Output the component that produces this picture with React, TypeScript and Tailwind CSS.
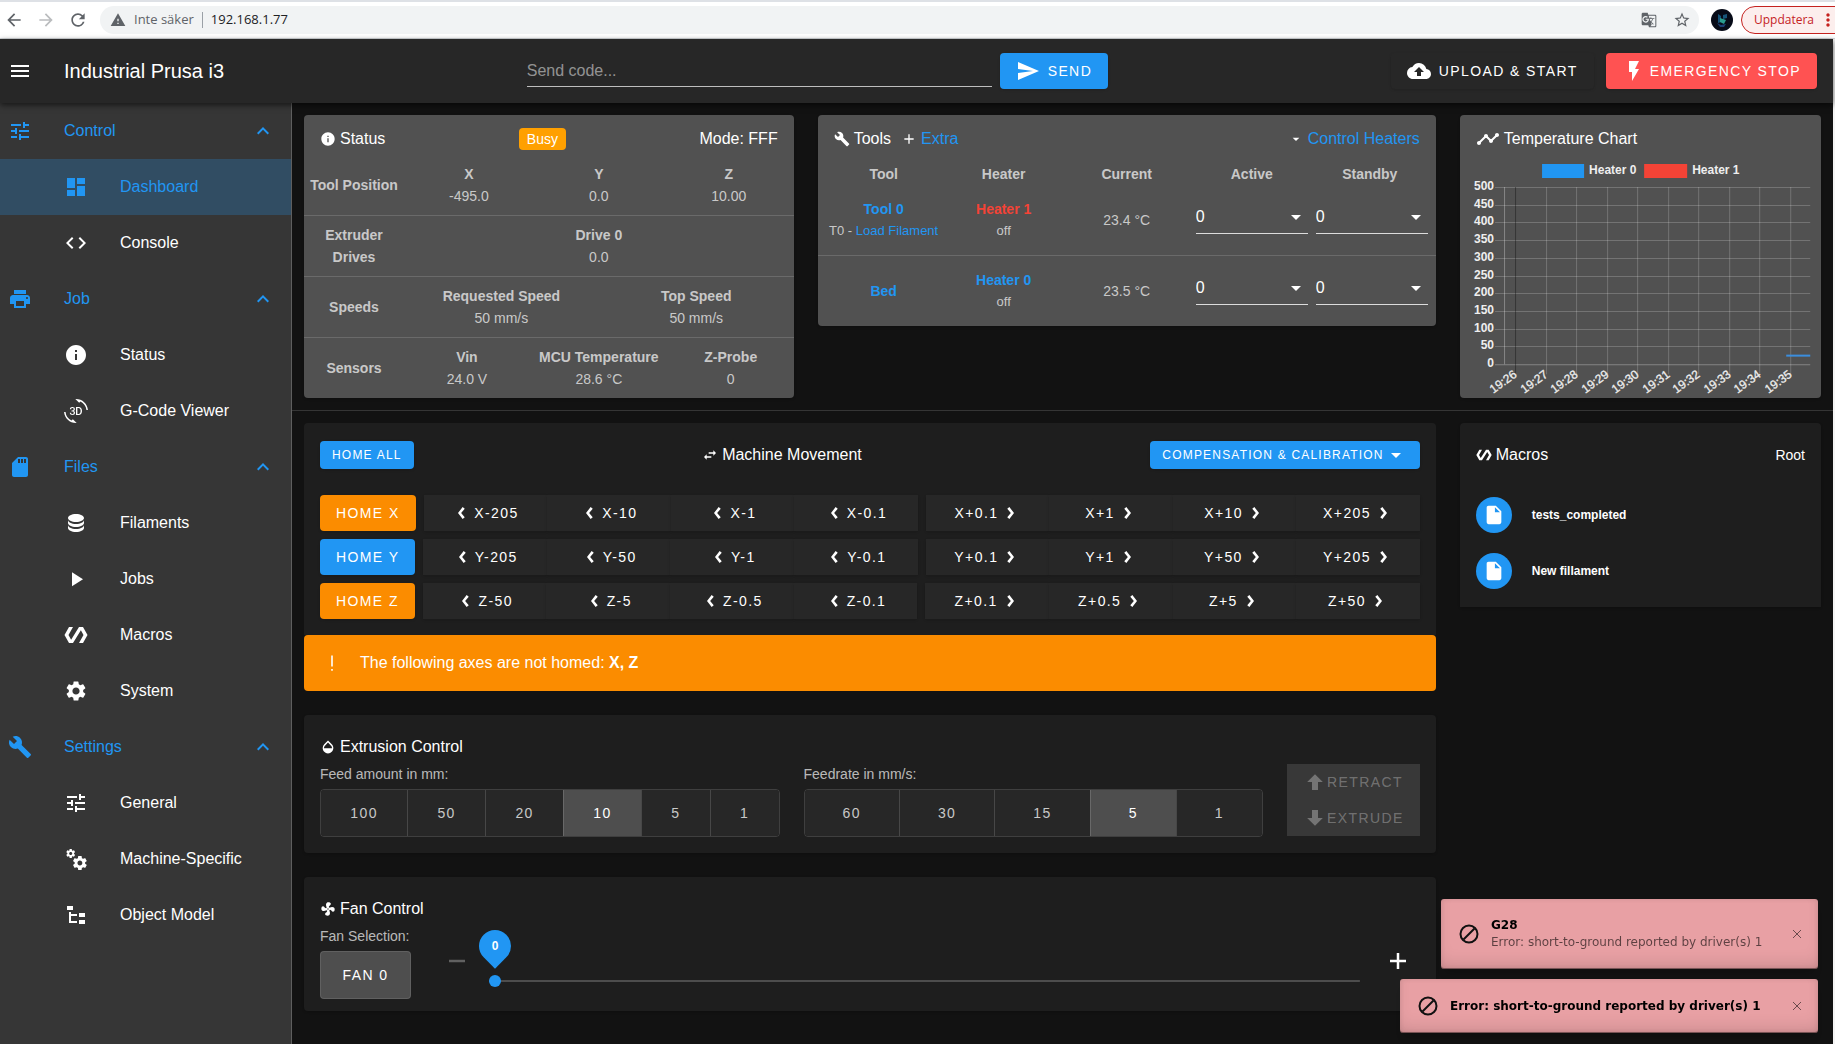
import { useState } from "react";
import type { ComponentType, ReactNode } from "react";
import clsx from "clsx";
import {
  Md3dRotation,
  MdAdd,
  MdArrowBack,
  MdArrowForward,
  MdBackup,
  MdBuild,
  MdCode,
  MdDashboard,
  MdGTranslate,
  MdInfo,
  MdKeyboardArrowUp,
  MdMenu,
  MdMoreVert,
  MdOpacity,
  MdPolymer,
  MdPrint,
  MdRefresh,
  MdSdCard,
  MdSend,
  MdSettings,
  MdStarBorder,
  MdTimeline,
  MdTune,
  MdWarning,
} from "react-icons/md";

type IconType = ComponentType<{ className?: string }>;

function mdi(path: string): IconType {
  return function Icon({ className }) {
    return (
      <svg viewBox="0 0 24 24" fill="currentColor" className={className} aria-hidden="true">
        <path d={path} />
      </svg>
    );
  };
}

const DatabaseIcon = mdi(
  "M12,3C7.58,3 4,4.79 4,7C4,9.21 7.58,11 12,11C16.42,11 20,9.21 20,7C20,4.79 16.42,3 12,3M4,9V12C4,14.21 7.58,16 12,16C16.42,16 20,14.21 20,12V9C20,11.21 16.42,13 12,13C7.58,13 4,11.21 4,9M4,14V17C4,19.21 7.58,21 12,21C16.42,21 20,19.21 20,17V14C20,16.21 16.42,18 12,18C7.58,18 4,16.21 4,14Z"
);
const PlayIcon = mdi("M8,5.14V19.14L19,12.14L8,5.14Z");
const CogsIcon = mdi(
  "M15.9,18.45C17.25,18.45 18.35,17.35 18.35,16C18.35,14.65 17.25,13.55 15.9,13.55C14.54,13.55 13.45,14.65 13.45,16C13.45,17.35 14.54,18.45 15.9,18.45M21.1,16.68L22.58,17.84C22.71,17.95 22.75,18.13 22.66,18.29L21.26,20.71C21.17,20.86 21,20.92 20.83,20.86L19.09,20.16C18.73,20.44 18.33,20.67 17.91,20.85L17.64,22.7C17.62,22.87 17.47,23 17.3,23H14.5C14.32,23 14.18,22.87 14.15,22.7L13.89,20.85C13.46,20.67 13.07,20.44 12.71,20.16L10.96,20.86C10.81,20.92 10.62,20.86 10.54,20.71L9.14,18.29C9.05,18.13 9.09,17.95 9.22,17.84L10.7,16.68L10.65,16L10.7,15.31L9.22,14.16C9.09,14.05 9.05,13.86 9.14,13.71L10.54,11.29C10.62,11.13 10.81,11.07 10.96,11.13L12.71,11.84C13.07,11.56 13.46,11.32 13.89,11.15L14.15,9.29C14.18,9.13 14.32,9 14.5,9H17.3C17.47,9 17.62,9.13 17.64,9.29L17.91,11.15C18.33,11.32 18.73,11.56 19.09,11.84L20.83,11.13C21,11.07 21.17,11.13 21.26,11.29L22.66,13.71C22.75,13.86 22.71,14.05 22.58,14.16L21.1,15.31L21.15,16L21.1,16.68M6.69,8.07C7.56,8.07 8.26,7.37 8.26,6.5C8.26,5.63 7.56,4.92 6.69,4.92C5.82,4.92 5.12,5.63 5.12,6.5C5.12,7.37 5.82,8.07 6.69,8.07M10.03,6.94L11,7.68C11.07,7.75 11.09,7.87 11.03,7.97L10.13,9.53C10.08,9.63 9.96,9.67 9.86,9.63L8.74,9.18L8,9.62L7.81,10.81C7.79,10.92 7.7,11 7.59,11H5.79C5.67,11 5.58,10.92 5.56,10.81L5.4,9.62L4.64,9.18L3.52,9.63C3.41,9.67 3.3,9.63 3.24,9.53L2.34,7.97C2.28,7.87 2.31,7.75 2.39,7.68L3.34,6.94L3.31,6.5L3.34,6.06L2.39,5.32C2.31,5.25 2.28,5.13 2.34,5.03L3.24,3.47C3.3,3.37 3.41,3.33 3.52,3.37L4.63,3.82L5.4,3.38L5.56,2.19C5.58,2.08 5.67,2 5.79,2H7.59C7.7,2 7.79,2.08 7.81,2.19L8,3.38L8.74,3.82L9.86,3.37C9.96,3.33 10.08,3.37 10.13,3.47L11.03,5.03C11.09,5.13 11.07,5.25 11,5.32L10.03,6.06L10.06,6.5L10.03,6.94Z"
);
const FileTreeIcon = mdi(
  "M3,3H9V7H3V3M15,10H21V14H15V10M15,17H21V21H15V17M13,13H7V18H13V20H7L5,20V9H7V11H13V13Z"
);
const FanIcon = mdi(
  "M12,11A1,1 0 0,0 11,12A1,1 0 0,0 12,13A1,1 0 0,0 13,12A1,1 0 0,0 12,11M12.5,2C17,2 17.11,5.57 14.75,6.75C13.76,7.24 13.32,8.29 13.13,9.22C13.61,9.42 14.03,9.73 14.35,10.13C18.05,8.13 22.03,8.92 22.03,12.5C22.03,17 18.46,17.1 17.28,14.73C16.78,13.74 15.72,13.3 14.79,13.11C14.59,13.59 14.28,14 13.88,14.34C15.87,18.03 15.08,22 11.5,22C7,22 6.91,18.42 9.27,17.24C10.25,16.75 10.69,15.71 10.89,14.79C10.4,14.59 9.97,14.27 9.65,13.87C5.96,15.85 2,15.07 2,11.5C2,7 5.56,6.89 6.74,9.26C7.24,10.25 8.29,10.68 9.22,10.87C9.41,10.39 9.73,9.97 10.14,9.65C8.15,5.96 8.94,2 12.5,2Z"
);
const SwapIcon = mdi("M21,9L17,5V8H10V10H17V13M7,11L3,15L7,19V16H14V14H7V11Z");
const MenuDownIcon = mdi("M7,10L12,15L17,10H7Z");
const ArrowUpBoldIcon = mdi("M15,20H9V12H4.16L12,4.16L19.84,12H15V20Z");
const ArrowDownBoldIcon = mdi("M9,4H15V12H19.84L12,19.84L4.16,12H9V4Z");
const FileIcon = mdi(
  "M13,9V3.5L18.5,9M6,2C4.89,2 4,2.89 4,4V20A2,2 0 0,0 6,22H18A2,2 0 0,0 20,20V8L14,2H6Z"
);
const FlashIcon = mdi("M7,2V13H10V22L17,10H13L17,2H7Z");
const ChevronLeftIcon = mdi("M14.2,4L17,6.2L12.2,12L17,17.8L14.2,20L8,12Z");
const ChevronRightIcon = mdi("M9.8,4L7,6.2L11.8,12L7,17.8L9.8,20L16,12Z");
const PlusIcon = mdi("M20,13.25H13.25V20H10.75V13.25H4V10.75H10.75V4H13.25V10.75H20V13.25Z");
const MinusIcon = mdi("M20,13.25H4V10.75H20V13.25Z");

const menu: { name: string; icon: IconType; pages: { name: string; icon: IconType }[] }[] = [
  {
    name: "Control",
    icon: MdTune,
    pages: [
      { name: "Dashboard", icon: MdDashboard },
      { name: "Console", icon: MdCode },
    ],
  },
  {
    name: "Job",
    icon: MdPrint,
    pages: [
      { name: "Status", icon: MdInfo },
      { name: "G-Code Viewer", icon: Md3dRotation },
    ],
  },
  {
    name: "Files",
    icon: MdSdCard,
    pages: [
      { name: "Filaments", icon: DatabaseIcon },
      { name: "Jobs", icon: PlayIcon },
      { name: "Macros", icon: MdPolymer },
      { name: "System", icon: MdSettings },
    ],
  },
  {
    name: "Settings",
    icon: MdBuild,
    pages: [
      { name: "General", icon: MdTune },
      { name: "Machine-Specific", icon: CogsIcon },
      { name: "Object Model", icon: FileTreeIcon },
    ],
  },
];

const moves = [
  {
    axis: "X",
    homed: false,
    down: ["X-205", "X-10", "X-1", "X-0.1"],
    up: ["X+0.1", "X+1", "X+10", "X+205"],
  },
  {
    axis: "Y",
    homed: true,
    down: ["Y-205", "Y-50", "Y-1", "Y-0.1"],
    up: ["Y+0.1", "Y+1", "Y+50", "Y+205"],
  },
  {
    axis: "Z",
    homed: false,
    down: ["Z-50", "Z-5", "Z-0.5", "Z-0.1"],
    up: ["Z+0.1", "Z+0.5", "Z+5", "Z+50"],
  },
];

const heaters = [
  { tool: "Tool 0", filament: true, heater: "Heater 1", color: "text-[#f44336]", current: "23.4 °C" },
  { tool: "Bed", filament: false, heater: "Heater 0", color: "text-[#2196f3]", current: "23.5 °C" },
];

function BrowserBar() {
  return (
    <div className="flex h-[39px] items-center overflow-hidden border-t-2 border-b border-t-[#dee1e6] border-b-[#d5d8dc] bg-white pl-1 font-['Open_Sans',sans-serif]">
      <button type="button" aria-label="Back" className="mr-3 flex w-5 justify-center">
        <MdArrowBack className="size-5 text-[#5f6368]" />
      </button>
      <button type="button" aria-label="Forward" className="mr-3 flex w-5 justify-center">
        <MdArrowForward className="size-5 text-[#babcbe]" />
      </button>
      <button type="button" aria-label="Reload" className="mr-3 flex w-5 justify-center">
        <MdRefresh className="size-5 text-[#5f6368]" />
      </button>
      <div className="flex h-7 flex-1 items-center rounded-full bg-[#f1f3f4] pr-2 pl-2.5 text-[13px] text-[#5f6368]">
        <MdWarning className="size-4" />
        <span className="ml-2">Inte säker</span>
        <span className="mx-2 h-4 w-px bg-[#9aa0a6]" />
        <input
          aria-label="Address"
          defaultValue="192.168.1.77"
          className="min-w-0 flex-1 bg-transparent text-[#202124] outline-none"
        />
        <MdGTranslate className="mr-4 size-4" />
        <MdStarBorder className="size-[18px]" />
      </div>
      <span className="ml-3 flex size-[22px] items-center justify-center rounded-full bg-[#070b18]">
        <svg viewBox="0 0 22 22" className="size-[22px]" aria-hidden="true">
          <path d="M7 5l3 2v6l-3 1zM12 6l4-1v4l-4 1z" fill="#17557a" />
          <path d="M9 9l6 2-2 4-4-2z" fill="#2a9d8f" />
          <path d="M6 14l4 2 5-1-2 3H9z" fill="#1c3f73" />
        </svg>
      </span>
      <button
        type="button"
        className="-mr-5 ml-2 flex h-7 shrink-0 items-center rounded-full border border-[#c5221f] bg-[#fceeed] pr-4 pl-3 text-xs text-[#c5221f]"
      >
        Uppdatera
        <MdMoreVert className="ml-1 size-5" />
      </button>
    </div>
  );
}

function Header() {
  return (
    <header className="relative z-10 flex h-16 items-center justify-between bg-[#272727] pr-4 shadow-[0_2px_6px_rgba(0,0,0,0.6)]">
      <div className="mr-5 flex items-center pl-2">
        <button type="button" aria-label="Toggle menu" className="mr-8">
          <MdMenu className="size-6" />
        </button>
        <h1 className="text-xl">Industrial Prusa i3</h1>
      </div>
      <form className="flex w-[32%] items-center gap-2" onSubmit={(e) => e.preventDefault()}>
        <input
          aria-label="Send code"
          placeholder="Send code..."
          className="h-8 min-w-0 flex-1 border-b border-white/70 bg-transparent text-base outline-none placeholder:text-white/50"
        />
        <button
          type="submit"
          className="flex h-9 items-center rounded bg-[#2196f3] px-4 text-sm tracking-widest shadow"
        >
          <MdSend className="mr-2 size-6" />
          SEND
        </button>
      </form>
      <div className="flex items-center gap-3 text-sm tracking-widest">
        <button type="button" className="flex h-9 items-center rounded px-4 shadow">
          <MdBackup className="mr-2 size-6" />
          UPLOAD &amp; START
        </button>
        <button type="button" className="flex h-9 items-center rounded bg-[#ff5252] px-4 shadow">
          <FlashIcon className="mr-1 size-6" />
          EMERGENCY STOP
        </button>
      </div>
    </header>
  );
}

function Sidebar() {
  return (
    <nav className="w-[292px] shrink-0 border-r border-white/20 bg-[#363636]">
      {menu.map((category) => (
        <div key={category.name}>
          <button
            type="button"
            className="flex h-14 w-full items-center pr-4 pl-2 text-left text-[#2196f3]"
          >
            <category.icon className="mr-8 size-6" />
            <span className="flex-1">{category.name}</span>
            <MdKeyboardArrowUp className="size-6" />
          </button>
          {category.pages.map((page) => (
            <a
              key={page.name}
              href="#"
              className={clsx(
                "flex h-14 items-center pl-16",
                page.name === "Dashboard" && "bg-[#314d63] text-[#2196f3]"
              )}
            >
              <page.icon className="mr-8 size-6" />
              {page.name}
            </a>
          ))}
        </div>
      ))}
    </nav>
  );
}

function StatusRow({
  label,
  items,
  className = "auto-cols-fr grid-flow-col",
}: {
  label: string;
  items: [string, string][];
  className?: string;
}) {
  return (
    <div className="flex items-center border-t border-white/15 py-2 text-center text-sm leading-[22px] text-white/70 first:border-t-0">
      <strong className="w-[100px] px-1">{label}</strong>
      <div className={clsx("grid flex-1", className)}>
        {items.map(([name, value]) => (
          <div key={name} className="flex flex-col">
            <strong>{name}</strong>
            <span>{value}</span>
          </div>
        ))}
      </div>
    </div>
  );
}

function StatusPanel() {
  return (
    <section className="col-span-4 rounded bg-[#515151] shadow">
      <div className="flex h-10 items-center justify-between px-4 pt-2">
        <h2 className="flex items-center">
          <MdInfo className="mr-1 size-4" />
          Status
        </h2>
        <span className="rounded bg-[#ffa000] px-2 text-sm leading-[22px]">Busy</span>
        <span>Mode: FFF</span>
      </div>
      <div>
        <StatusRow
          label="Tool Position"
          items={[
            ["X", "-495.0"],
            ["Y", "0.0"],
            ["Z", "10.00"],
          ]}
        />
        <StatusRow label="Extruder Drives" items={[["Drive 0", "0.0"]]} />
        <StatusRow
          label="Speeds"
          items={[
            ["Requested Speed", "50 mm/s"],
            ["Top Speed", "50 mm/s"],
          ]}
        />
        <StatusRow
          label="Sensors"
          className="grid-cols-[1fr_138px_1fr]"
          items={[
            ["Vin", "24.0 V"],
            ["MCU Temperature", "28.6 °C"],
            ["Z-Probe", "0"],
          ]}
        />
      </div>
    </section>
  );
}

function TempSelect({ label }: { label: string }) {
  return (
    <div className="relative border-b border-white/80">
      <select
        aria-label={label}
        className="block h-7 w-full appearance-none bg-transparent pb-1 text-base text-white outline-none"
      >
        <option>0</option>
      </select>
      <MenuDownIcon className="pointer-events-none absolute top-0 right-0 size-6 text-white" />
    </div>
  );
}

function ToolsPanel() {
  return (
    <section className="col-span-5 rounded bg-[#515151] shadow">
      <div className="flex h-10 items-center px-4 pt-2">
        <h2 className="flex items-center">
          <MdBuild className="mr-1 size-4" />
          Tools
        </h2>
        <MdAdd className="mr-1 ml-2.5 size-4" />
        <a href="#" className="text-[#2196f3]">
          Extra
        </a>
        <MenuDownIcon className="mr-1 ml-auto size-4" />
        <a href="#" className="text-[#2196f3]">
          Control Heaters
        </a>
      </div>
      <table className="w-full table-fixed text-center text-sm leading-[22px] text-white/70">
        <colgroup>
          <col className="w-[132px]" />
          <col className="w-[108px]" />
          <col />
          <col className="w-[120px]" />
          <col className="w-[124px]" />
        </colgroup>
        <thead>
          <tr className="h-[38px]">
            <th>Tool</th>
            <th>Heater</th>
            <th className="pl-1">Current</th>
            <th>Active</th>
            <th className="pr-2">Standby</th>
          </tr>
        </thead>
        <tbody>
          {heaters.map((row, i) => (
            <tr key={row.tool} className={i > 0 ? "h-[71px] border-t border-white/15" : "h-[62px]"}>
              <td className={i === 0 ? "pb-2" : undefined}>
                <a href="#" className="block font-bold text-[#2196f3]">
                  {row.tool}
                </a>
                {row.filament && (
                  <span className="block text-[13px] leading-[22px] whitespace-nowrap">
                    T0 -{" "}
                    <a href="#" className="text-[#2196f3]">
                      Load Filament
                    </a>
                  </span>
                )}
              </td>
              <td className={i === 0 ? "pb-2" : undefined}>
                <a href="#" className={clsx("block font-bold", row.color)}>
                  {row.heater}
                </a>
                <span className="block text-[13px] leading-[22px]">off</span>
              </td>
              <td className={clsx("pl-1", i === 0 && "pb-2")}>{row.current}</td>
              <td className={clsx("px-1", i === 0 && "pb-2")}>
                <TempSelect label={`${row.heater} active temperature`} />
              </td>
              <td className={clsx("pr-2 pl-1", i === 0 && "pb-2")}>
                <TempSelect label={`${row.heater} standby temperature`} />
              </td>
            </tr>
          ))}
        </tbody>
      </table>
    </section>
  );
}

const times = ["19:26", "19:27", "19:28", "19:29", "19:30", "19:31", "19:32", "19:33", "19:34", "19:35"];
const temps = [500, 450, 400, 350, 300, 250, 200, 150, 100, 50, 0];

function ChartPanel() {
  return (
    <section className="col-span-3 rounded bg-[#515151] shadow">
      <h2 className="flex h-10 items-center px-4 pt-2">
        <MdTimeline className="mr-1 size-6" />
        Temperature Chart
      </h2>
      <svg
        viewBox="0 0 361 243"
        className="block w-full overflow-visible font-['Liberation_Sans',Arial,sans-serif] text-xs font-bold"
        role="img"
        aria-label="Heater temperatures"
      >
        <rect x="82" y="9" width="42" height="14" fill="#2196f3" />
        <text x="129" y="19" fill="#eee">
          Heater 0
        </text>
        <rect x="184" y="9" width="43" height="14" fill="#f44336" />
        <text x="232" y="19" fill="#eee">
          Heater 1
        </text>
        {temps.map((temp, i) => {
          const y = Math.round(32 + i * 17.7) + 0.5;
          return (
            <g key={temp}>
              <line x1="35" x2="350" y1={y} y2={y} stroke="#fff" strokeOpacity={temp ? 0.2 : 0.3} />
              <text x="34" y={y + 2} textAnchor="end" fill="#eee">
                {temp}
              </text>
            </g>
          );
        })}
        <line x1="44.5" x2="44.5" y1="32" y2="209" stroke="#fff" strokeOpacity="0.3" />
        {times.map((time, i) => {
          const x = Math.round(55 + i * 30.5) + 0.5;
          return (
            <g key={time}>
              <line
                x1={x}
                x2={x}
                y1="32"
                y2="219"
                stroke={i ? "#fff" : "#000"}
                strokeOpacity={i ? 0.2 : 0.35}
              />
              <text
                textAnchor="end"
                fill="#eee"
                fontWeight="400"
                stroke="#eee"
                strokeWidth="0.3"
                transform={`translate(${x + 2} 221) rotate(-36)`}
              >
                {time}
              </text>
            </g>
          );
        })}
        <line x1="326" x2="350" y1="200.5" y2="200.5" stroke="#3b8ede" strokeWidth="2" />
      </svg>
    </section>
  );
}

function MovementPanel() {
  return (
    <section>
      <div className="rounded-t bg-[#1e1e1e] px-4 pt-[18px] pb-4">
        <div className="mb-[26px] flex items-center justify-between">
          <button
            type="button"
            className="h-7 rounded bg-[#2196f3] px-3 text-xs tracking-widest shadow"
          >
            HOME ALL
          </button>
          <h2 className="flex items-center">
            <SwapIcon className="mr-1 size-4" />
            Machine Movement
          </h2>
          <button
            type="button"
            className="flex h-7 items-center rounded bg-[#2196f3] px-3 text-xs tracking-widest shadow"
          >
            COMPENSATION &amp; CALIBRATION
            <MenuDownIcon className="size-6" />
          </button>
        </div>
        <div className="flex flex-col gap-2">
          {moves.map((row) => (
            <div key={row.axis} className="flex gap-2 text-sm tracking-widest">
              <button
                type="button"
                className={clsx(
                  "h-9 rounded px-4 shadow",
                  row.homed ? "bg-[#2196f3]" : "bg-[#fb8c00]"
                )}
              >
                HOME {row.axis}
              </button>
              <div className="flex flex-1">
                {row.down.map((label) => (
                  <MoveButton key={label}>
                    <ChevronLeftIcon className="mr-1 size-[18px]" />
                    {label}
                  </MoveButton>
                ))}
              </div>
              <div className="flex flex-1">
                {row.up.map((label) => (
                  <MoveButton key={label}>
                    {label}
                    <ChevronRightIcon className="ml-1 size-[18px]" />
                  </MoveButton>
                ))}
              </div>
            </div>
          ))}
        </div>
      </div>
      <div role="alert" className="flex h-14 items-center rounded bg-[#fb8c00] px-4">
        <svg viewBox="0 0 24 24" className="mr-4 size-6" fill="currentColor" aria-hidden="true">
          <path d="M11.2 4.5h1.6v11h-1.6zM11.2 18h1.6v1.8h-1.6z" />
        </svg>
        <p>
          The following axes are not homed: <strong>X, Z</strong>
        </p>
      </div>
    </section>
  );
}

function MoveButton({ children }: { children: ReactNode }) {
  return (
    <button
      type="button"
      className="flex h-9 min-w-0 flex-1 items-center justify-center bg-[#272727] shadow"
    >
      {children}
    </button>
  );
}

function Choice({ label, values, initial }: { label: string; values: string[]; initial: string }) {
  const [value, setValue] = useState(initial);

  return (
    <div className="flex-1">
      <p className="mb-1 text-sm leading-[22px] text-white/70">{label}</p>
      <div
        role="group"
        aria-label={label}
        className="flex h-12 overflow-hidden rounded border border-white/15"
      >
        {values.map((item) => (
          <button
            key={item}
            type="button"
            aria-pressed={item === value}
            onClick={() => setValue(item)}
            className={clsx(
              "flex-auto border-l border-white/15 px-3 text-sm tracking-widest first:border-l-0",
              item === value ? "bg-[#4e4e4e] text-white" : "bg-[#272727] text-white/75"
            )}
          >
            {item}
          </button>
        ))}
      </div>
    </div>
  );
}

function ExtrusionPanel() {
  return (
    <section className="rounded bg-[#1e1e1e] px-4 pt-5 pb-4 shadow">
      <h2 className="mb-1 flex items-center">
        <MdOpacity className="mr-1 size-4" />
        Extrusion Control
      </h2>
      <div className="flex items-center gap-6">
        <Choice
          label="Feed amount in mm:"
          values={["100", "50", "20", "10", "5", "1"]}
          initial="10"
        />
        <Choice label="Feedrate in mm/s:" values={["60", "30", "15", "5", "1"]} initial="5" />
        <div className="flex flex-col bg-[#383838] text-sm tracking-widest text-white/30">
          <button type="button" disabled className="flex h-9 items-center px-4">
            <ArrowUpBoldIcon className="size-6" />
            RETRACT
          </button>
          <button type="button" disabled className="flex h-9 items-center px-4">
            <ArrowDownBoldIcon className="size-6" />
            EXTRUDE
          </button>
        </div>
      </div>
    </section>
  );
}

function FanPanel() {
  const [speed, setSpeed] = useState(0);

  return (
    <section className="rounded bg-[#1e1e1e] px-4 pt-5 pb-3 shadow">
      <h2 className="mb-1 flex items-center">
        <FanIcon className="mr-1 size-4" />
        Fan Control
      </h2>
      <div className="flex">
        <div>
          <p className="mb-1 text-sm leading-[22px] text-white/70">Fan Selection:</p>
          <button
            type="button"
            className="h-12 w-[91px] rounded border border-white/10 bg-[#4e4e4e] text-sm tracking-widest"
          >
            FAN 0
          </button>
        </div>
        <button
          type="button"
          aria-label="Decrease"
          disabled
          className="ml-6 flex w-11 items-center justify-center pb-0.5 text-white/30"
        >
          <MinusIcon className="size-6" />
        </button>
        <div className="relative mr-4 ml-2.5 flex-1 pt-[50px]">
          <input
            type="range"
            aria-label="Fan 0 speed"
            min={0}
            max={100}
            value={speed}
            onChange={(e) => setSpeed(Number(e.target.value))}
            className="block h-3 w-full appearance-none bg-[linear-gradient(#4d4d4d,#4d4d4d)] bg-[length:100%_2px] bg-center bg-no-repeat [&::-webkit-slider-thumb]:size-3 [&::-webkit-slider-thumb]:appearance-none [&::-webkit-slider-thumb]:rounded-full [&::-webkit-slider-thumb]:bg-[#2196f3]"
          />
          <span className="absolute top-[5px] -left-2.5 flex size-8 items-center justify-center">
            <span className="absolute size-8 -rotate-45 rounded-[50%_50%_50%_0] bg-[#2196f3]" />
            <span className="relative text-xs font-bold">{speed}</span>
          </span>
        </div>
        <button
          type="button"
          aria-label="Increase"
          className="flex w-11 items-center justify-center pb-0.5"
        >
          <PlusIcon className="size-6" />
        </button>
      </div>
    </section>
  );
}

function MacrosPanel() {
  return (
    <section className="rounded-t bg-[#1e1e1e] pb-2 shadow">
      <div className="flex h-16 items-center justify-between px-4">
        <h2 className="flex items-center">
          <MdPolymer className="mr-1 size-4" />
          Macros
        </h2>
        <a href="#" className="text-sm">
          Root
        </a>
      </div>
      {["tests_completed", "New fillament"].map((macro) => (
        <a key={macro} href="#" className="flex h-14 items-center px-4 text-xs font-bold">
          <span className="mr-5 flex size-9 items-center justify-center rounded-full bg-[#2196f3]">
            <FileIcon className="size-[22px]" />
          </span>
          {macro}
        </a>
      ))}
    </section>
  );
}

function Toast({ title, children }: { title: string; children?: ReactNode }) {
  return (
    <div
      role="alert"
      className={clsx(
        "flex items-center rounded-[3px] bg-[#e8a0a4] pr-3.5 pl-[18px] text-black shadow-[inset_0_-10px_20px_-10px_rgba(0,0,0,0.2),inset_0_0_5px_rgba(0,0,0,0.1),inset_0_-1px_0_rgba(0,0,0,0.4),0_8px_8px_-5px_rgba(0,0,0,0.25)]",
        children ? "h-[70px] min-w-[377px]" : "h-[54px] min-w-[418px]"
      )}
    >
      <svg viewBox="0 0 20 20" className="mr-3 size-5" fill="none" stroke="#111" strokeWidth="2">
        <circle cx="10" cy="10" r="8.5" />
        <path d="M4.5 15.5l11-11" />
      </svg>
      <div className="flex-1 text-xs leading-[17px]">
        <strong>{title}</strong>
        {children && <p className="text-black/60">{children}</p>}
      </div>
      <button type="button" aria-label="Close" className="ml-5">
        <svg viewBox="0 0 14 14" className="size-3.5" stroke="#6b4a4c" strokeWidth="1">
          <path d="M3 3l8 8M11 3l-8 8" />
        </svg>
      </button>
    </div>
  );
}

export default function App() {
  return (
    <div className="flex min-h-screen flex-col">
      <BrowserBar />
      <div className="flex flex-1 flex-col border-r-2 border-[#f5f5f5] bg-[#121212] font-['Liberation_Sans',Arial,sans-serif] text-base text-white">
        <Header />
        <div className="flex flex-1">
          <Sidebar />
          <main className="min-w-0 flex-1">
            <div className="grid grid-cols-12 items-start gap-6 border-b border-white/15 p-3">
              <StatusPanel />
              <ToolsPanel />
              <ChartPanel />
            </div>
            <div className="grid grid-cols-12 items-start gap-6 p-3">
              <div className="col-span-9 flex flex-col gap-6">
                <MovementPanel />
                <ExtrusionPanel />
                <FanPanel />
              </div>
              <div className="col-span-3">
                <MacrosPanel />
              </div>
            </div>
          </main>
        </div>
      </div>
      <div className="fixed right-[17px] bottom-[11px] z-20 flex flex-col items-end gap-2.5 font-['DejaVu_Sans',Verdana,sans-serif]">
        <Toast title="G28">Error: short-to-ground reported by driver(s) 1</Toast>
        <Toast title="Error: short-to-ground reported by driver(s) 1" />
      </div>
    </div>
  );
}
